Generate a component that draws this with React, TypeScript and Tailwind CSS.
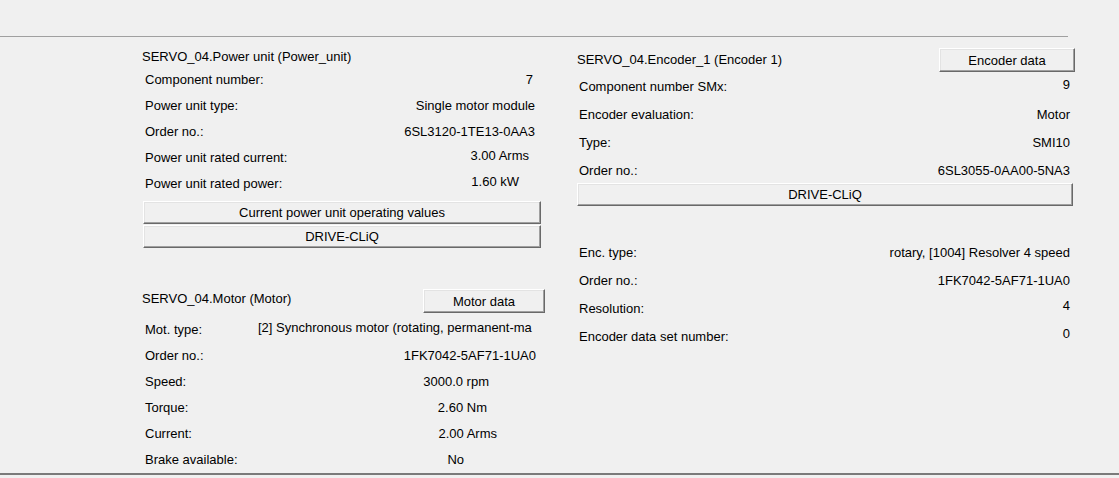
import React from "react";

type Row = {
  label: string;
  value: string;
  valueClass?: string;
};

const FONT = "font-['Liberation_Sans',Arial,sans-serif]";

const powerRows: Row[] = [
  { label: "Component number:", value: "7", valueClass: "pr-[12px]" },
  { label: "Power unit type:", value: "Single motor module", valueClass: "pr-[10px]" },
  { label: "Order no.:", value: "6SL3120-1TE13-0AA3", valueClass: "pr-[10px]" },
  { label: "Power unit rated current:", value: "3.00 Arms", valueClass: "pr-[16px] pb-[4px]" },
  { label: "Power unit rated power:", value: "1.60 kW", valueClass: "pr-[26px] pb-[4px]" },
];

const motorRows: Row[] = [
  { label: "Order no.:", value: "1FK7042-5AF71-1UA0", valueClass: "pr-[9px]" },
  { label: "Speed:", value: "3000.0 rpm", valueClass: "pr-[56px]" },
  { label: "Torque:", value: "2.60 Nm", valueClass: "pr-[58px]" },
  { label: "Current:", value: "2.00 Arms", valueClass: "pr-[48px]" },
  { label: "Brake available:", value: "No", valueClass: "pr-[81px]" },
];

const encoderRows: Row[] = [
  { label: "Component number SMx:", value: "9", valueClass: "pb-[3px]" },
  { label: "Encoder evaluation:", value: "Motor" },
  { label: "Type:", value: "SMI10" },
  { label: "Order no.:", value: "6SL3055-0AA00-5NA3" },
];

const encTypeRows: Row[] = [
  { label: "Enc. type:", value: "rotary, [1004] Resolver 4 speed" },
  { label: "Order no.:", value: "1FK7042-5AF71-1UA0" },
  { label: "Resolution:", value: "4", valueClass: "pb-[5px]" },
  { label: "Encoder data set number:", value: "0", valueClass: "pb-[6px]" },
];

// classic 3D push button
function WinButton({ children, className }: { children: React.ReactNode; className?: string }) {
  return (
    <button
      className={`flex items-center justify-center bg-[#f0f0f0] border border-t-white border-l-white border-r-[#696969] border-b-[#696969] shadow-[inset_-1px_-1px_0_#a0a0a0,inset_1px_1px_0_#e3e3e3] text-black ${className ?? ""}`}
    >
      {children}
    </button>
  );
}

function InfoRow({ row, height, labelPad, valuePad }: { row: Row; height: string; labelPad: string; valuePad: string }) {
  return (
    <div className={`flex items-center justify-between ${height}`}>
      <span className={labelPad}>{row.label}</span>
      <span className={`${valuePad} ${row.valueClass ?? ""}`}>{row.value}</span>
    </div>
  );
}

export default function App() {
  return (
    <div className={`w-[1119px] h-[478px] bg-[#f0f0f0] text-black text-[13px] leading-[15px] flex flex-col overflow-hidden ${FONT}`}>
      <div className="h-[36px]" />
      <div className="w-[1068px] h-px bg-[#a0a0a0]" />

      <div className="flex flex-1 pl-[142px] gap-[32px]">
        {/* Left: power unit + motor */}
        <div className="w-[403px] flex flex-col pt-[9px]">
          <div className="h-[20px] flex items-center">SERVO_04.Power unit (Power_unit)</div>
          <div className="flex flex-col">
            {powerRows.map((r) => (
              <InfoRow key={r.label} row={r} height="h-[26px]" labelPad="pl-[3px]" valuePad="" />
            ))}
          </div>
          <div className="flex flex-col gap-px mt-[5px] ml-px w-[398px]">
            <WinButton className="h-[23px]">Current power unit operating values</WinButton>
            <WinButton className="h-[23px]">DRIVE-CLiQ</WinButton>
          </div>

          <div className="flex items-center justify-between h-[24px] mt-[41px]">
            <span className="pb-[5px]">SERVO_04.Motor (Motor)</span>
            <WinButton className="w-[122px] h-[24px]">Motor data</WinButton>
          </div>
          <div className="flex flex-col mt-[3px]">
            <div className="flex items-center h-[26px]">
              <span className="pl-[3px] w-[116px] pt-[1px]">Mot. type:</span>
              <span className="w-[279px] whitespace-nowrap overflow-hidden pb-[4px]">
                [2] Synchronous motor (rotating, permanent-ma
              </span>
            </div>
            {motorRows.map((r) => (
              <InfoRow key={r.label} row={r} height="h-[26px]" labelPad="pl-[3px]" valuePad="" />
            ))}
          </div>
        </div>

        {/* Right: encoder */}
        <div className="w-[498px] flex flex-col pt-[11px]">
          <div className="flex items-center justify-between h-[24px]">
            <span className="pb-[2px]">SERVO_04.Encoder_1 (Encoder 1)</span>
            <WinButton className="w-[136px] h-[24px]">Encoder data</WinButton>
          </div>
          <div className="flex flex-col">
            {encoderRows.map((r) => (
              <InfoRow key={r.label} row={r} height="h-[28px]" labelPad="pl-[2px]" valuePad="pr-[5px]" />
            ))}
          </div>
          <WinButton className="w-[496px] h-[23px] -mt-px">DRIVE-CLiQ</WinButton>

          <div className="flex flex-col mt-[32px]">
            {encTypeRows.map((r) => (
              <InfoRow key={r.label} row={r} height="h-[28px]" labelPad="pl-[2px]" valuePad="pr-[5px]" />
            ))}
          </div>
        </div>
      </div>

      <div className="h-[5px] border-t-2 border-[#7a7a7a] bg-[#f0f0f0]" />
    </div>
  );
}
